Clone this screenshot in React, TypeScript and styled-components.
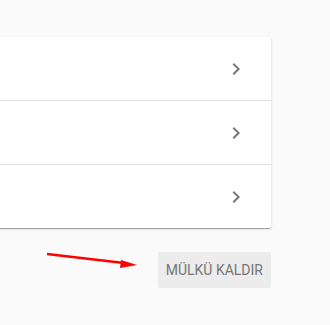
import styled, { createGlobalStyle } from "styled-components";

const GlobalStyle = createGlobalStyle`
  html, body {
    margin: 0;
    padding: 0;
    background: #fafafa;
    font-family: Roboto, "Liberation Sans", sans-serif;
    overflow: hidden;
  }
`;

const Page = styled.div`
  display: flex;
  flex-direction: column;
  align-items: flex-end;
  gap: 24px;
  padding: 37px 59px 0 0;
  width: 330px;
  box-sizing: border-box;
`;

const Card = styled.div`
  width: 300px;
  background: #fff;
  border-radius: 2px;
  box-shadow: 0 2px 1px -1px rgba(0, 0, 0, 0.2), 0 1px 1px 0 rgba(0, 0, 0, 0.14),
    0 1px 3px 0 rgba(0, 0, 0, 0.12);
`;

const Row = styled.div`
  height: 63px;
  display: flex;
  align-items: center;
  justify-content: flex-end;
  padding-right: 23px;
  & + & {
    border-top: 1px solid #e0e0e0;
  }
`;

const Chevron = styled.svg`
  width: 24px;
  height: 24px;
  fill: #757575;
`;

const Actions = styled.div`
  display: flex;
  align-items: flex-start;
`;

const Arrow = styled.svg`
  width: 92px;
  height: 16px;
  margin-right: 20px;
  display: block;
`;

const RemoveButton = styled.button`
  height: 36px;
  padding: 0 8px;
  min-width: 88px;
  border: none;
  border-radius: 2px;
  background: #ececec;
  color: #767676;
  font-family: Roboto, "Liberation Sans", sans-serif;
  font-size: 14px;
  font-weight: 400;
  letter-spacing: 0;
  text-transform: uppercase;
  cursor: pointer;
`;

function ChevronRight() {
  return (
    <Chevron viewBox="0 0 24 24">
      <path d="M10 6 8.59 7.41 13.17 12l-4.58 4.59L10 18l6-6z" />
    </Chevron>
  );
}

export default function App() {
  return (
    <>
      <GlobalStyle />
      <Page>
        <Card>
          <Row>
            <ChevronRight />
          </Row>
          <Row>
            <ChevronRight />
          </Row>
          <Row>
            <ChevronRight />
          </Row>
        </Card>
        <Actions>
          <Arrow viewBox="0 0 92 16">
            <line x1="1" y1="2" x2="78" y2="11" stroke="#ff0000" strokeWidth="2.6" />
            <polygon points="75,8 91,13 74,16" fill="#ff0000" />
          </Arrow>
          <RemoveButton>Mülkü kaldır</RemoveButton>
        </Actions>
      </Page>
    </>
  );
}
